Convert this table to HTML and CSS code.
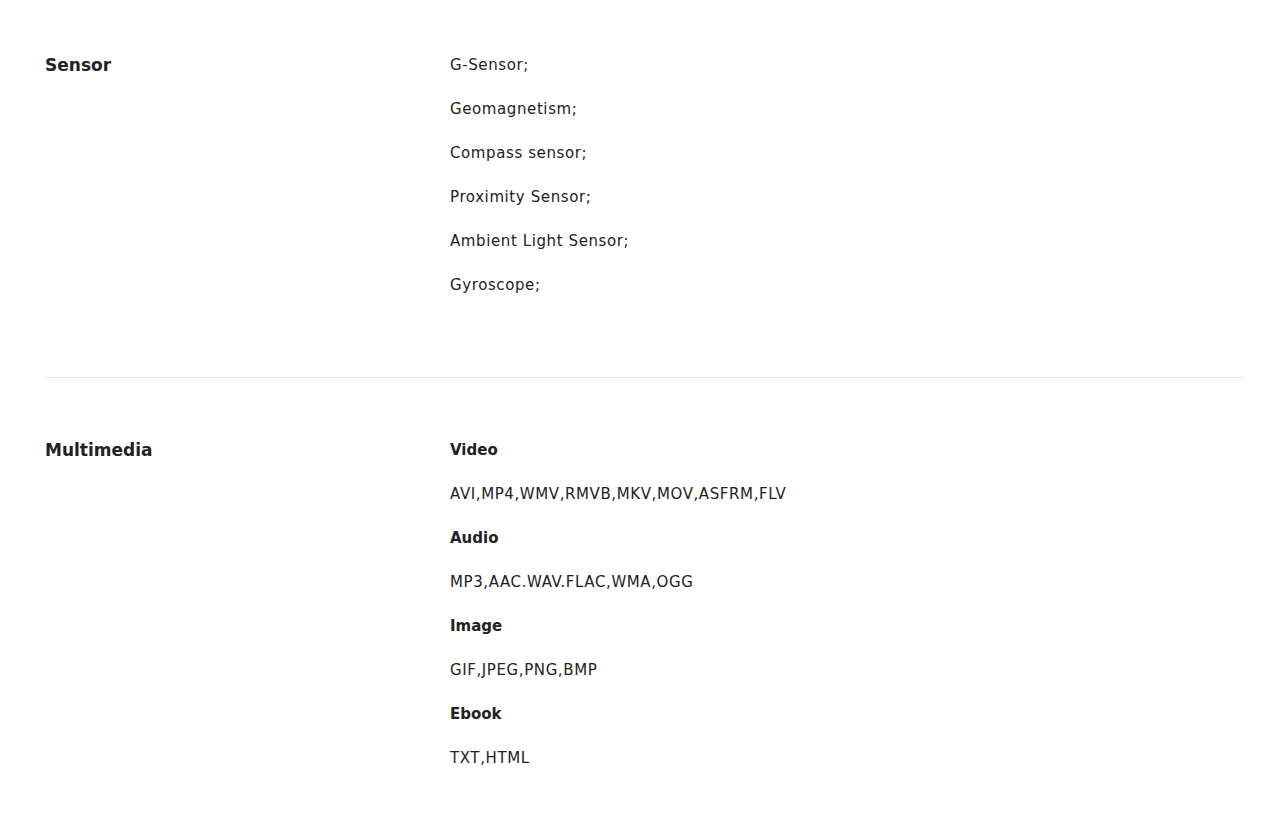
FILE: index.html
```html
<!DOCTYPE html>
<html lang="en">
<head>
    <meta charset="UTF-8">
    <meta name="viewport" content="width=device-width, initial-scale=1.0">
    <title>Specifications</title>
    <link rel="stylesheet" href="styles.css">
</head>
<body>
    <div class="specs">
        <div class="spec-row first">
            <div class="spec-label">Sensor</div>
            <div class="spec-values">
                <p>G-Sensor;</p>
                <p>Geomagnetism;</p>
                <p>Compass sensor;</p>
                <p>Proximity Sensor;</p>
                <p>Ambient Light Sensor;</p>
                <p>Gyroscope;</p>
            </div>
        </div>
        <div class="spec-row">
            <div class="spec-label">Multimedia</div>
            <div class="spec-values">
                <p class="sub">Video</p>
                <p>AVI,MP4,WMV,RMVB,MKV,MOV,ASFRM,FLV</p>
                <p class="sub">Audio</p>
                <p>MP3,AAC.WAV.FLAC,WMA,OGG</p>
                <p class="sub">Image</p>
                <p>GIF,JPEG,PNG,BMP</p>
                <p class="sub">Ebook</p>
                <p>TXT,HTML</p>
            </div>
        </div>
    </div>
</body>
</html>
```

FILE: styles.css
```css
body {
    margin: 0;
    padding: 0;
    background-color: #fff;
    color: #222;
    font-family: "DejaVu Sans", Arial, sans-serif;
}
.specs {
    padding: 0 25px 0 45px;
}
.spec-row {
    display: grid;
    grid-template-columns: 405px 1fr;
    padding: 60px 0 56px;
}
.spec-row.first {
    padding-top: 53px;
    padding-bottom: 80px;
    border-bottom: 1px solid #e6e6e6;
}
.spec-label {
    font-size: 17px;
    font-weight: bold;
    line-height: 24px;
}
.spec-values p {
    margin: 0 0 20px;
    font-size: 15px;
    line-height: 24px;
    letter-spacing: 0.6px;
}
.spec-values p:last-child {
    margin-bottom: 0;
}
.spec-values .sub {
    font-weight: bold;
    letter-spacing: 0;
}
```
